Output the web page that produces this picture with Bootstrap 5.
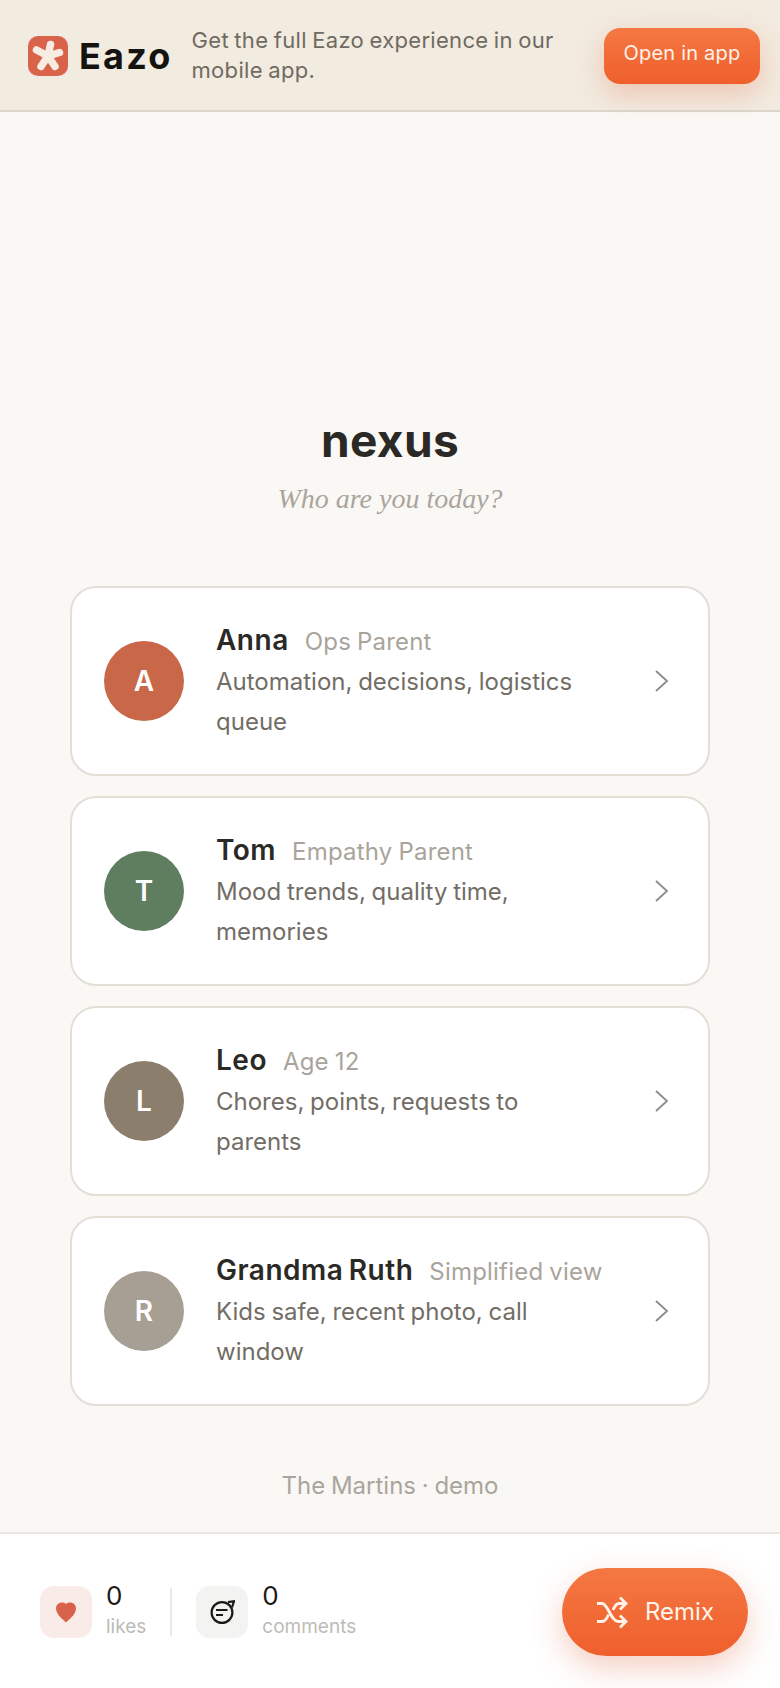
<!DOCTYPE html>
<html lang="en"><head><meta charset="utf-8"><title>nexus</title>
<link href="https://cdn.jsdelivr.net/npm/bootstrap@5.3.0/dist/css/bootstrap.min.css" rel="stylesheet">
<style>
html,body{height:100%}
body{background:#faf8f5;font-family:Inter,"Liberation Sans",sans-serif;color:#2b2926}
.shell{height:1688px;overflow:hidden}
.promo{height:112px;background:#f2ebe0;border-bottom:2px solid #dcd7cd;padding:2px 20px 0 28px;flex:none}
.logo-glyph{width:40px;height:40px;flex:none}
.wordmark{font-size:36px;font-weight:700;letter-spacing:2.200px;color:#141310;margin-left:11px;line-height:1}
.promo-text{font-size:22px;line-height:30px;color:#6f6a62;margin-left:19px;letter-spacing:.3px;word-spacing:-1px;width:372px;flex:none;margin-bottom:2px}
.open-btn{width:156px;height:56px;border-radius:16px;background:linear-gradient(180deg,#f47843,#ef5f2c);color:#fff3ea;font-size:20px;border:0;box-shadow:0 10px 28px rgba(222,96,56,.28);padding:0 0 6px;letter-spacing:.2px;flex:none}
.brand-title{font-size:46px;font-weight:700;line-height:56px;letter-spacing:.4px;color:#2b2926;margin-top:300px}
.tagline{font-family:"Liberation Serif",serif;font-style:italic;font-size:28px;line-height:36px;color:#aaa59c;margin-top:13px}
.persons{width:640px;margin-top:69px;gap:20px}
.person{height:190px;border:2px solid #e3dfd7;border-radius:26px;background:#fff;padding:0 38px 0 32px}
.face{width:80px;height:80px;background:#c96848;color:#fff;font-size:28px;font-weight:600;flex:none}
.person-body{margin-left:32px}
.person-name{font-size:28px;font-weight:600;line-height:40px;letter-spacing:.5px;word-spacing:-2px;color:#2b2926}
.person-role{font-size:24px;color:#a9a49b;font-weight:400;margin-left:16px;letter-spacing:.2px;word-spacing:-1px}
.person-desc{font-size:24px;line-height:40px;color:#726d65;letter-spacing:0;word-spacing:-1px;width:380px}
.note{font-size:24px;color:#aaa59c;letter-spacing:0;word-spacing:-1px;line-height:32px;margin-top:64px}
.dock{height:156px;background:#fff;border-top:2px solid #e9e7e3;padding:2px 32px 0 40px;flex:none}
.tile{width:52px;height:52px;border-radius:14px;flex:none}
.stat{gap:14px}
.count{font-size:26px;line-height:30px;color:#1b1a18}
.count-label{font-size:19px;line-height:26px;color:#bdbbb7;margin-top:3px;margin-bottom:4px}
.vline{width:2px;height:48px;background:#e9e7e3;margin:0 24px}
.remix-btn{width:186px;height:88px;border-radius:44px;background:linear-gradient(180deg,#f47843,#ef5f2c);color:#fff3ea;font-size:24px;border:0;box-shadow:0 12px 32px rgba(222,96,56,.3);gap:17px}
.chev{width:16px;height:24px;flex:none;fill:none;stroke:#8f8a83;stroke-width:1.8}
</style></head>
<body>
<div class="shell d-flex flex-column">
<header class="promo d-flex align-items-center">
<svg class="logo-glyph" viewBox="0 0 40 40"><rect width="40" height="40" rx="10" fill="#d9634a"/><g stroke="#f6ece2" stroke-width="7.500" stroke-linecap="round"><path d="M20 20 22.500 8.500M20 20 31.500 16.500M20 20 27 30.500M20 20 13 30.500M20 20 8.500 14"/></g></svg>
<span class="wordmark">Eazo</span>
<span class="promo-text">Get the full Eazo experience in our mobile app.</span>
<button class="open-btn ms-auto" type="button">Open in app</button>
</header>
<main class="flex-grow-1 d-flex flex-column align-items-center">
<h1 class="brand-title mb-0 text-center">nexus</h1>
<p class="tagline text-center mb-0">Who are you today?</p>
<div class="persons d-flex flex-column">
<div class="person d-flex align-items-center"><div class="face rounded-circle d-flex align-items-center justify-content-center">A</div><div class="person-body flex-grow-1"><div class="person-name">Anna<span class="person-role">Ops Parent</span></div><div class="person-desc">Automation, decisions, logistics queue</div></div><svg class="chev" viewBox="0 0 16 24"><path d="M2 2l11 10L2 22"/></svg></div>
<div class="person d-flex align-items-center"><div class="face rounded-circle d-flex align-items-center justify-content-center" style="background:#5f7d5f">T</div><div class="person-body flex-grow-1"><div class="person-name">Tom<span class="person-role">Empathy Parent</span></div><div class="person-desc">Mood trends, quality time, memories</div></div><svg class="chev" viewBox="0 0 16 24"><path d="M2 2l11 10L2 22"/></svg></div>
<div class="person d-flex align-items-center"><div class="face rounded-circle d-flex align-items-center justify-content-center" style="background:#8c7e6c">L</div><div class="person-body flex-grow-1"><div class="person-name">Leo<span class="person-role">Age 12</span></div><div class="person-desc">Chores, points, requests to parents</div></div><svg class="chev" viewBox="0 0 16 24"><path d="M2 2l11 10L2 22"/></svg></div>
<div class="person d-flex align-items-center"><div class="face rounded-circle d-flex align-items-center justify-content-center" style="background:#a89f94">R</div><div class="person-body flex-grow-1"><div class="person-name">Grandma Ruth<span class="person-role">Simplified view</span></div><div class="person-desc">Kids safe, recent photo, call window</div></div><svg class="chev" viewBox="0 0 16 24"><path d="M2 2l11 10L2 22"/></svg></div>
</div>
<p class="note text-center mb-0">The Martins · demo</p>
</main>
<footer class="dock d-flex align-items-center">
<div class="stat d-flex align-items-center"><div class="tile d-flex align-items-center justify-content-center" style="background:#f9ece8"><svg width="22" height="22" viewBox="0 0 22 22"><path fill="#d9634a" d="M11 21.500C9 19 1 14 1 7.500 1 3.500 4 1.500 7 1.500 8.800 1.500 10 2 11 3 12 2 13.200 1.500 15 1.500 18 1.500 21 3.500 21 7.500 21 14 13 19 11 21.500Z"/></svg></div><div><div class="count">0</div><div class="count-label">likes</div></div></div>
<div class="vline"></div>
<div class="stat d-flex align-items-center"><div class="tile d-flex align-items-center justify-content-center" style="background:#f3f3f2"><svg width="26" height="26" viewBox="0 0 26 26" fill="none" stroke="#1b1a18" stroke-width="2.200"><circle cx="13" cy="13.500" r="10.400"/><path d="M19 3.200 25 2.200 23 8.500" stroke-linejoin="miter"/><path d="M7 11h11.500M7 16h7"/></svg></div><div><div class="count">0</div><div class="count-label">comments</div></div></div>
<button class="remix-btn ms-auto d-flex align-items-center justify-content-center" type="button"><svg width="32" height="33" viewBox="0 0 32 33" fill="none" stroke="#fff3ea" stroke-width="2.800"><path d="M1 7.500h5c6 0 9 18 16 18h8M1 25.500h5c3 0 5-3 6.500-7M17 14c1.500-3.500 3-6.500 6-6.500h7M24 1.500l6 6-6 6M24 19.500l6 6-6 6"/></svg>Remix</button>
</footer>
</div>
</body></html>
